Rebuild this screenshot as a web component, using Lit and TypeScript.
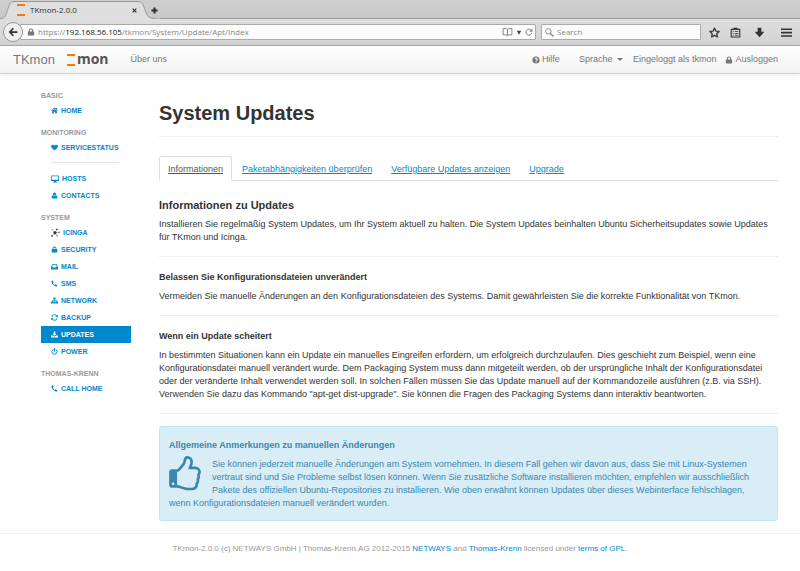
import { LitElement, html, svg, css } from "lit";
import { customElement, property } from "lit/decorators.js";

const glyphs = {
  home: svg`<path d="M8 1 0 8l1 1.2L8 3.2l7 6L16 8l-2.500-2.200V2h-2v2z"/><path d="M8 4.500 2.500 9v6H6.500v-4h3v4h4V9z"/>`,
  heart: svg`<path d="M8 15 1.400 8.500C-.6 6.300-.1 1.500 4 1.500c2 0 3.200 1.200 4 2.200.8-1 2-2.200 4-2.200 4.100 0 4.600 4.800 2.600 7z"/>`,
  desktop: svg`<path fill-rule="evenodd" d="M1 1h14q1 0 1 1v9q0 1-1 1h-4.500v2H12v1H4v-1h1.500v-2H1q-1 0-1-1V2q0-1 1-1zm.5 1.500v7h13v-7z"/>`,
  user: svg`<circle cx="8" cy="4.500" r="3.600"/><path d="M4.500 7.500C2 8 1.500 11 1.500 13c0 1.400.9 2 2 2h9c1.100 0 2-.6 2-2 0-2-.5-5-3-5.500-2 2-5 2-7 0z"/>`,
  lock: svg`<path fill-rule="evenodd" d="M2.500 7h1V5.500a4.500 4.500 0 0 1 9 0V7h1q.8 0 .8.800v6.400q0 .8-.8.800h-11q-.8 0-.8-.8V7.800q0-.8.8-.8zm3.200 0h4.600V5.500a2.300 2.300 0 0 0-4.600 0z"/>`,
  inbox: svg`<path fill-rule="evenodd" d="M3.500 2h9L16 9v5q0 1-1 1H1q-1 0-1-1V9zm1.200 2L2.300 9H5.200l1 2h3.600l1-2h2.900l-2.400-5z"/>`,
  phone: svg`<path d="M1.200 3C1.500 2 3 1.200 4 1.200c.7 0 1.800 2.800 2 3.400.1.900-1.500 1.700-1.500 2.400C5 8.700 7.500 11.100 9 11.500c.7 0 1.500-1.600 2.400-1.500.7.2 3.400 1.500 3.400 2 0 1-.8 2.500-1.800 2.800C8.500 16 .2 8 1.200 3z"/>`,
  sitemap: svg`<path d="M5.500 1h5v4.500H8.700V7.200h5.100V10.500H16V15h-5v-4.500h1.400V8.500H8.700v2h1.800V15h-5v-4.500h1.800v-2H3.600v2H5V15H0v-4.500h2.200V7.200h5.100V5.500H5.500z"/>`,
  refresh: svg`<g fill="none" stroke="currentColor" stroke-width="2.200"><path d="M1.700 7A6.400 6.400 0 0 1 13 4"/><path d="M14.300 9A6.400 6.400 0 0 1 3 12"/></g><path d="M15.500 1v6h-6zM.5 15V9h6z"/>`,
  download: svg`<path d="M6.300 1h3.400v5H13L8 11 3 6h3.300z"/><path d="M0 10h4.500L8 13l3.500-3H16v5H0z"/>`,
  power: svg`<g fill="none" stroke="currentColor" stroke-width="2.200" stroke-linecap="round"><path d="M4.500 3.500a6 6 0 1 0 7 0"/><path d="M8 1.200v6.300"/></g>`,
  question: svg`<path fill-rule="evenodd" d="M8 .8a7.200 7.200 0 1 1 0 14.400A7.200 7.200 0 0 1 8 .8zM7 11v2h2.200v-2zM4.800 5.800l1.700.9c.8-1.500 2.700-1.200 2.700.1C9.200 7.900 7 8.200 7 10.200h2.200c0-1.200 2.300-1.500 2.300-3.700C11.500 2.700 6.500 2 4.800 5.800z"/>`,
  icinga: svg`<g fill="#333" stroke="#333"><circle cx="7" cy="8.500" r="2.300"/><path stroke-width=".6" d="M7 8.500 2.500 3M7 8.500 10.500 3M7 8.500 2 14M7 8.500l3.500 5M7 8.500l7-.8"/><circle cx="10.500" cy="2.500" r="1"/><circle cx="1.800" cy="14" r="1"/><circle cx="2" cy="3" r=".3"/><circle cx="10.800" cy="14" r=".5"/><circle cx="14.500" cy="7.500" r=".7"/></g>`,
  star: svg`<path fill="none" stroke="currentColor" stroke-width="1.800" stroke-linejoin="round" d="m8 1.500 2 4.400 4.800.6-3.500 3.300.9 4.700L8 12.200l-4.200 2.300.9-4.700L1.200 6.500 6 5.900z"/>`,
  clipboard: svg`<path fill="none" stroke="currentColor" stroke-width="1.600" d="M1.800 3.500h12.400v11H1.800z"/><path d="M5 1h6v3H5zM4 6h1.500v1.200H4zm3 0h5v1.200H7zM4 8.600h1.500v1.200H4zm3 0h5v1.200H7zm-3 2.600h1.500v1.200H4zm3 0h5v1.200H7z"/>`,
  save: svg`<path d="M5.300 1h5.400v6H15l-7 8-7-8h4.300z"/>`,
  menu: svg`<path d="M0 2h16v2.300H0zm0 5h16v2.300H0zm0 5h16v2.300H0z"/>`,
  back: svg`<path fill="none" stroke="currentColor" stroke-width="2.800" d="M8.500 2 3 8l5.500 6M3 8h12"/>`,
  search: svg`<g fill="none" stroke="currentColor" stroke-width="1.500"><circle cx="6" cy="6" r="4.800"/><path stroke-width="2.200" d="m9.500 9.500 5.500 5.500"/></g>`,
  book: svg`<path fill="none" stroke="currentColor" stroke-width="1.400" d="M1 2.500h5l2 1.300 2-1.300h5v10h-5l-2 1.500-2-1.500H1zM8 4v9.500"/>`,
  caret: svg`<path d="M2 3h12L8 14z"/>`,
  reload: svg`<path fill="none" stroke="currentColor" stroke-width="2" d="M12.500 4.500a6 6 0 1 0 1.300 5"/><path d="M15 1v6.500H8.500z"/>`,
  close: svg`<path fill="none" stroke="currentColor" stroke-width="3.800" d="m2 2 12 12M14 2 2 14"/>`,
  plus: svg`<path d="M5.500 1h5v4.500H15v5h-4.500V15h-5v-4.500H1v-5h4.500z"/>`,
  logo: svg`<path fill="#f57c00" d="M0-4h16v4H0zm0 20h16v4H0z"/>`,
};
type GlyphName = keyof typeof glyphs;

@customElement("ui-icon")
class UiIcon extends LitElement {
  @property() name: GlyphName = "home";
  static styles = css`
    :host { display: inline-block; width: 8px; height: 8px; flex: none; }
    svg { display: block; width: 100%; height: 100%; fill: currentColor; overflow: visible; }
  `;
  render() {
    return html`<svg viewBox="0 0 16 16" aria-hidden="true">${glyphs[this.name]}</svg>`;
  }
}

interface NavItem { icon: GlyphName; label: string; active?: boolean; divider?: boolean; }
const groups: { title: string; items: NavItem[] }[] = [
  { title: "BASIC", items: [{ icon: "home", label: "HOME" }] },
  {
    title: "MONITORING",
    items: [
      { icon: "heart", label: "SERVICESTATUS", divider: true },
      { icon: "desktop", label: "HOSTS" },
      { icon: "user", label: "CONTACTS" },
    ],
  },
  {
    title: "SYSTEM",
    items: [
      { icon: "icinga", label: "ICINGA" },
      { icon: "lock", label: "SECURITY" },
      { icon: "inbox", label: "MAIL" },
      { icon: "phone", label: "SMS" },
      { icon: "sitemap", label: "NETWORK" },
      { icon: "refresh", label: "BACKUP" },
      { icon: "download", label: "UPDATES", active: true },
      { icon: "power", label: "POWER" },
    ],
  },
  { title: "THOMAS-KRENN", items: [{ icon: "phone", label: "CALL HOME" }] },
];

@customElement("browser-bar")
class BrowserBar extends LitElement {
  static styles = css`
    :host { display: block; font: 8px/12px "Open Sans", "Noto Sans", sans-serif; color: #333; }
    button { border: 0; padding: 0; background: none; color: inherit; display: flex; align-items: center; justify-content: center; }
    .strip { position: relative; display: flex; align-items: center; height: 18px; background: linear-gradient(#cfcfcf, #c8c8c8); border-bottom: 1px solid #999; }
    .shape { position: absolute; left: 0; top: 0; width: 160px; height: 19px; }
    .tab { position: relative; display: flex; align-items: center; width: 120px; padding: 2px 0 0 17px; gap: 5px; }
    .tab .title { flex: 1; }
    .tab ui-icon.x { width: 5px; height: 5px; }
    .new { position: relative; margin-left: 14px; padding-top: 2px; }
    .new ui-icon { width: 7px; height: 7px; }
    .bar { display: flex; align-items: center; height: 26px; padding-right: 8px; background: linear-gradient(#dedede, #d3d3d3); border-bottom: 1px solid #aaa; }
    .back { position: relative; z-index: 1; box-sizing: border-box; width: 20px; height: 20px; margin-left: 3px; border: 1px solid #999; border-radius: 50%; background: #eee; flex: none; }
    .back ui-icon { width: 10px; height: 10px; }
    .field { box-sizing: border-box; display: flex; align-items: center; height: 16px; background: #fcfcfc; border: 1px solid #aaa; border-radius: 1px; }
    .address { flex: 1; margin-left: -3px; padding: 0 2px 0 6px; gap: 3px; color: #777; }
    .address .url { flex: 1; color: #888; outline: none; white-space: nowrap; }
    .address .host { color: #222; }
    .address ui-icon.book { width: 11px; height: 10px; }
    .address ui-icon.caret { width: 6px; height: 7px; color: #444; }
    .address ui-icon.reload { color: #6e8596; }
    .search { width: 160px; margin-left: 5px; padding: 0 3px; gap: 3px; color: #777; }
    .search ui-icon { width: 9px; height: 9px; }
    input { flex: 1; min-width: 0; border: 0; padding: 0; background: none; font: inherit; color: #333; outline: none; }
    input::placeholder { color: #888; opacity: 1; }
    .tools { display: flex; align-items: center; gap: 10px; margin-left: 8px; }
    .tools ui-icon { width: 11px; height: 11px; }
    .tools .gap { margin-left: 3px; }
    .tools .menu { margin-left: 6px; }
  `;
  render() {
    return html`
      <div class="strip">
        <svg class="shape" viewBox="0 0 160 19" aria-hidden="true">
          <path d="M0 18.500c6 0 6-4 8-10S10.500 1.500 16 1.500h120c6 0 6.500 1 8.500 7s3 10 11 10h5V19H0z" fill="#dedede"/>
          <path d="M0 18.500c6 0 6-4 8-10S10.500 1.500 16 1.500h120c6 0 6.500 1 8.500 7s3 10 11 10" fill="none" stroke="#999"/>
        </svg>
        <div class="tab">
          <ui-icon class="logo" name="logo"></ui-icon><span class="title">TKmon-2.0.0</span>
          <button aria-label="Close tab"><ui-icon class="x" name="close"></ui-icon></button>
        </div>
        <button class="new" aria-label="New tab"><ui-icon name="plus"></ui-icon></button>
      </div>
      <div class="bar">
        <button class="back" aria-label="Back"><ui-icon name="back"></ui-icon></button>
        <div class="field address">
          <ui-icon name="lock"></ui-icon>
          <span class="url" role="textbox" aria-label="Address" contenteditable="true" spellcheck="false">https://<span class="host">192.168.56.105</span>/tkmon/System/Update/Apt/Index</span>
          <ui-icon class="book" name="book"></ui-icon>
          <ui-icon class="caret" name="caret"></ui-icon>
          <button aria-label="Reload"><ui-icon class="reload" name="reload"></ui-icon></button>
        </div>
        <label class="field search"><ui-icon name="search"></ui-icon><input type="search" aria-label="Search" placeholder="Search" /></label>
        <div class="tools">
          <button aria-label="Bookmark"><ui-icon name="star"></ui-icon></button>
          <button aria-label="Bookmarks list"><ui-icon name="clipboard"></ui-icon></button>
          <button class="gap" aria-label="Downloads"><ui-icon name="save"></ui-icon></button>
          <button class="menu" aria-label="Menu"><ui-icon name="menu"></ui-icon></button>
        </div>
      </div>
    `;
  }
}

@customElement("app-root")
class AppRoot extends LitElement {
  static styles = css`
    :host { display: block; min-height: 100vh; background: #fff; color: #333; font: 9px/13px "Liberation Sans", Arial, sans-serif; }
    a { color: #08c; text-decoration: none; }
    h1, h2, h3, p, ul { margin: 0; padding: 0; }
    ul { list-style: none; }
    .navbar { display: flex; align-items: center; height: 27px; padding: 0 22px 0 13px; background: linear-gradient(#fff, #f2f2f2); border-bottom: 1px solid #d4d4d4; box-shadow: 0 1px 6px rgba(0, 0, 0, 0.08); color: #777; }
    .navbar a { color: #777; }
    .navbar .brand { font-size: 13px; line-height: 16px; }
    .navbar .logo { display: flex; align-items: center; gap: 2px; margin-left: 12px; padding-bottom: 2px; color: #555; font: bold 14px/16px "Open Sans", "Noto Sans", sans-serif; }
    .logo ui-icon { margin-top: 2px; }
    .about { margin-left: 22px; }
    .right { display: flex; align-items: center; margin-left: auto; }
    .right a { display: flex; align-items: center; gap: 2px; }
    .lang { display: flex; align-items: center; margin: 0 10px 0 19px; gap: 4px; }
    .lang select { appearance: none; border: 0; padding: 0; background: none; font: inherit; color: inherit; }
    .lang .tri { width: 0; border: 3px solid transparent; border-top-color: #777; border-bottom: 0; }
    .logout { margin-left: 9px; }
    .page { display: grid; grid-template-columns: 90px minmax(0, 1fr); gap: 28px; padding: 15px 22px 0 41px; }
    .side { font-size: 7px; font-weight: bold; line-height: 17px; }
    .side h2 { font-size: 7px; line-height: 13px; color: #999; }
    .group { margin-bottom: 7px; }
    .side a { display: flex; align-items: center; gap: 3px; padding-left: 10px; }
    .side a ui-icon { width: 7px; height: 7px; }
    .side a ui-icon[name="desktop"] { width: 8px; height: 8px; }
    .side a ui-icon[name="icinga"] { width: 9px; height: 9px; }
    .side a.active { background: #08c; color: #fff; }
    .divider { height: 1px; margin: 6px 12px 7px 10px; background: #e5e5e5; }
    h1 { padding: 14px 0 13px; font-size: 20px; line-height: 20px; border-bottom: 1px solid #eee; }
    .tabs { display: flex; margin-top: 19px; border-bottom: 1px solid #ddd; }
    .tabs a { padding: 6px 8px 4px; margin: 0 1px -1px 0; border: 1px solid transparent; text-decoration: underline; }
    .tabs a.active { color: #555; background: #fff; border-color: #ddd #ddd #fff; border-radius: 3px 3px 0 0; }
    h2 { font-size: 11px; line-height: 13px; }
    h3 { font-size: 9px; line-height: 13px; }
    .content section { padding: 14px 0 12px; border-bottom: 1px solid #eee; }
    .content section.first { padding-top: 18px; }
    section p { margin-top: 6px; }
    .alert { margin-top: 12px; padding: 12px 9px 10px; background: #d9edf7; border: 1px solid #bce8f1; border-radius: 3px; color: #3a87ad; }
    .alert p { margin-top: 6px; }
    .thumb { float: left; width: 32px; height: 37px; margin: 4px 11px 0 0; fill: currentColor; }
    footer { margin-top: 12px; padding: 8px 0; border-top: 1px solid #f2f2f2; text-align: center; font-size: 8px; color: #999; }
  `;
  render() {
    return html`
      <browser-bar></browser-bar>
      <nav class="navbar">
        <a class="brand" href="#">TKmon</a>
        <a class="logo" href="#"><ui-icon name="logo"></ui-icon>mon</a>
        <a class="about" href="#">Über uns</a>
        <div class="right">
          <a href="#"><ui-icon name="question"></ui-icon>Hilfe</a>
          <label class="lang"><select aria-label="Sprache"><option>Sprache</option></select><span class="tri"></span></label>
          <span>Eingeloggt als tkmon</span>
          <a class="logout" href="#"><ui-icon name="lock"></ui-icon>Ausloggen</a>
        </div>
      </nav>
      <div class="page">
        <aside class="side">
          ${groups.map((g) => html`
            <div class="group">
              <h2>${g.title}</h2>
              <ul>
                ${g.items.map((i) => html`
                  <li><a href="#" class=${i.active ? "active" : ""}><ui-icon name=${i.icon}></ui-icon>${i.label}</a>
                  ${i.divider ? html`<div class="divider"></div>` : ""}</li>`)}
              </ul>
            </div>`)}
        </aside>
        <main class="content">
          <h1>System Updates</h1>
          <nav class="tabs">
            <a class="active" href="#">Informationen</a>
            <a href="#">Paketabhängigkeiten überprüfen</a>
            <a href="#">Verfügbare Updates anzeigen</a>
            <a href="#">Upgrade</a>
          </nav>
          <section class="first">
            <h2>Informationen zu Updates</h2>
            <p>Installieren Sie regelmäßig System Updates, um Ihr System aktuell zu halten. Die System Updates beinhalten Ubuntu Sicherheitsupdates sowie Updates für TKmon und Icinga.</p>
          </section>
          <section>
            <h3>Belassen Sie Konfigurationsdateien unverändert</h3>
            <p>Vermeiden Sie manuelle Änderungen an den Konfigurationsdateien des Systems. Damit gewährleisten Sie die korrekte Funktionalität von TKmon.</p>
          </section>
          <section>
            <h3>Wenn ein Update scheitert</h3>
            <p>In bestimmten Situationen kann ein Update ein manuelles Eingreifen erfordern, um erfolgreich durchzulaufen. Dies geschieht zum Beispiel, wenn eine Konfigurationsdatei manuell verändert wurde. Dem Packaging System muss dann mitgeteilt werden, ob der ursprüngliche Inhalt der Konfigurationsdatei oder der veränderte Inhalt verwendet werden soll. In solchen Fällen müssen Sie das Update manuell auf der Kommandozeile ausführen (z.B. via SSH). Verwenden Sie dazu das Kommando "apt-get dist-upgrade". Sie können die Fragen des Packaging Systems dann interaktiv beantworten.</p>
          </section>
          <div class="alert">
            <h3>Allgemeine Anmerkungen zu manuellen Änderungen</h3>
            <svg class="thumb" viewBox="0 0 1536 1792" aria-hidden="true"><path d="M256 1344q0-26-19-45t-45-19-45 19-19 45 19 45 45 19 45-19 19-45zm1152-576q0-51-39-89.500t-89-38.500h-352q0-58 48-159.500t48-160.500q0-98-32-145t-128-47q-26 26-38 85t-30.500 125.500-59.500 109.500q-22 23-77 91-4 5-23 30t-31.500 41-34.500 42.500-40 44-38.500 35.500-40 27-35.500 9h-32v640h32q13 0 31.500 3t33 6.500 38 11 35 11.500 35.500 12.500 29 10.500q211 73 342 73h121q192 0 192-167 0-26-5-56 30-16 47.500-52.500t17.500-73.500-18-69q53-50 53-119 0-25-10-55.500t-25-47.500q32-1 53.500-47t21.500-81zm128-1q0 89-49 163 9 33 9 69 0 77-38 144 3 21 3 43 0 101-60 178 1 139-85 219.500t-227 80.500h-129q-96 0-189.500-22.500t-216.500-65.500q-116-40-138-40h-288q-53 0-90.500-37.500t-37.500-90.500v-640q0-53 37.500-90.500t90.500-37.500h274q36-24 137-155 58-75 107-128 24-25 35.500-85.500t30.500-126.500 62-108q39-37 90-37 84 0 151 32.500t102 101.500 35 186q0 93-48 192h176q104 0 180 76t76 179z"/></svg>
            <p>Sie können jederzeit manuelle Änderungen am System vornehmen. In diesem Fall gehen wir davon aus, dass Sie mit Linux-Systemen vertraut sind und Sie Probleme selbst lösen können. Wenn Sie zusätzliche Software installieren möchten, empfehlen wir ausschließlich Pakete des offiziellen Ubuntu-Repositories zu installieren. Wie oben erwähnt können Updates über dieses Webinterface fehlschlagen, wenn Konfigurationsdateien manuell verändert wurden.</p>
          </div>
        </main>
      </div>
      <footer>TKmon-2.0.0 (c) NETWAYS GmbH | Thomas-Krenn.AG 2012-2015 <a href="#">NETWAYS</a> and <a href="#">Thomas-Krenn</a> licensed under <a href="#">terms of GPL</a>.</footer>
    `;
  }
}
